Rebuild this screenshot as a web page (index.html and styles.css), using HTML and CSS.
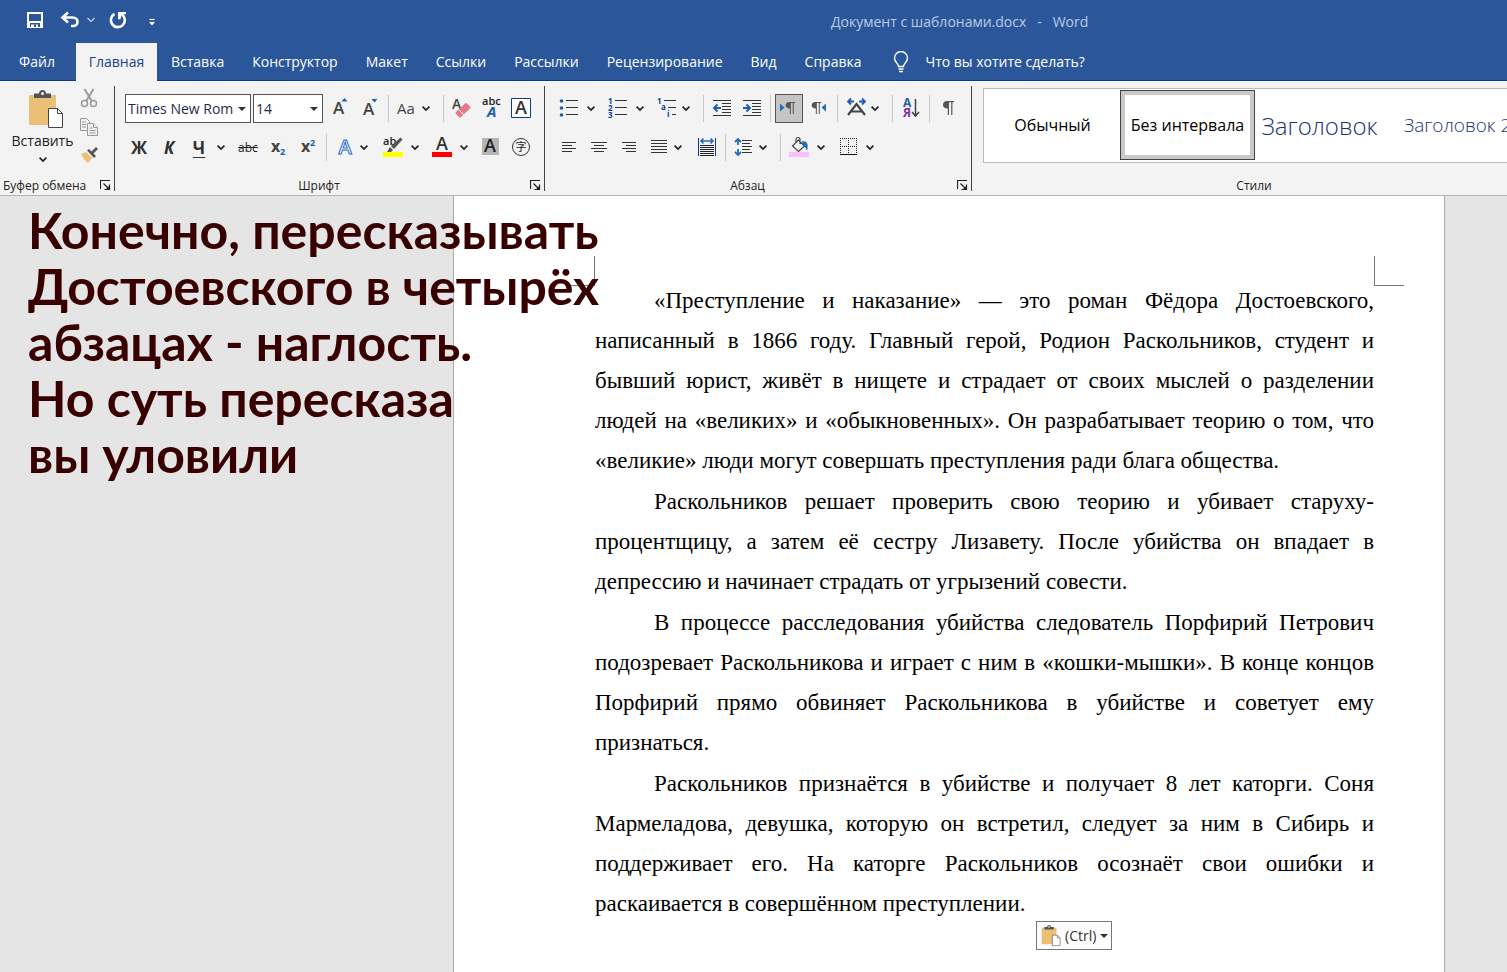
FILE: index.html
```html
<!DOCTYPE html>
<html lang="ru">
<head>
<meta charset="utf-8">
<title>Документ с шаблонами.docx - Word</title>
<link rel="stylesheet" href="styles.css">
</head>
<body>
<svg class="defs" aria-hidden="true">
  <symbol id="chev" viewBox="0 0 14 14"><path d="M3.6 5.6 7 9l3.400-3.400" fill="none" stroke="#222" stroke-width="1.700"/></symbol>
  <symbol id="launch" viewBox="0 0 11 11"><path d="M.5 9V.5H10M3.500 3.500l5 5M9.500 4.500v5h-5" fill="none" stroke="#222" stroke-width="1.200"/><path d="M9.800 5.500v4.300H5.500z" fill="#222"/></symbol>
  <symbol id="pilcrow" viewBox="0 0 14 16"><path d="M6 1h7v1.300h-1.600V15h-1.200V2.300H8V15H6.800V8.500C3.500 8.500 2 7 2 4.800S3.500 1 6 1z" fill="#555"/></symbol>
  <symbol id="clip" viewBox="0 0 36 40"><path d="M1 5h27v30H1z" fill="#eabf76"/><path d="M6 8V3.500h5C11 1.500 12.500 0 14.500 0S18 1.500 18 3.500h5V8z" fill="#555"/><circle cx="14.500" cy="3.500" r="1.500" fill="#f3f3f3"/><path d="M20.500 18.500h9l5 5v14h-14z" fill="#fff" stroke="#444"/><path d="M29.500 18.500v5h5" fill="none" stroke="#444"/></symbol>
</svg>

<header class="titlebar">
  <div class="quick">
    <button class="qb" aria-label="Сохранить"><svg width="18" height="18" viewBox="0 0 18 18"><path d="M1 1h16v16H1z" fill="#fff"/><path d="M3 3h12v7H3zM4 12h10v4H4z" fill="#2b579a"/><path d="M6 12h6v4H6z" fill="#2b579a"/><path d="M5 12h7v4h-2v-2.500H8V16H5z" fill="#fff"/><path d="M5 12h7v1.500H5z" fill="#2b579a"/></svg></button>
    <button class="qb undo" aria-label="Отменить"><svg width="20" height="18" viewBox="0 0 20 18"><path d="M8 1.500 2.500 6.500 8 11.500M3 6.500h9.500c3 0 5 2 5 4.500s-2 4-4.500 4h-2" fill="none" stroke="#fff" stroke-width="2.600"/></svg></button>
    <button class="qb qchev" aria-label="Список отмены"><svg width="10" height="8" viewBox="0 0 10 8"><path d="m1.500 2 3.500 3.500L8.500 2" fill="none" stroke="#c5d5ec" stroke-width="1.200"/></svg></button>
    <button class="qb redo" aria-label="Повторить"><svg width="20" height="20" viewBox="0 0 20 20"><path d="M6.500 4A7 7 0 1 0 14 4.500" fill="none" stroke="#fff" stroke-width="2.600"/><path d="M10 2h8v2.200h-4l-1.600 5H10z" fill="#fff"/></svg></button>
    <button class="qb more" aria-label="Настройка панели"><svg width="8" height="9" viewBox="0 0 8 9"><path d="M1.500 1.500h5" stroke="#fff" stroke-width="1.200"/><path d="M1 4h6L4 7.500z" fill="#fff"/></svg></button>
  </div>
  <div class="doctitle">Документ с шаблонами.docx&nbsp;&nbsp; -&nbsp;&nbsp; Word</div>
</header>

<nav class="tabs">
  <button class="tab file">Файл</button>
  <button class="tab active">Главная</button>
  <button class="tab">Вставка</button>
  <button class="tab">Конструктор</button>
  <button class="tab">Макет</button>
  <button class="tab">Ссылки</button>
  <button class="tab">Рассылки</button>
  <button class="tab">Рецензирование</button>
  <button class="tab">Вид</button>
  <button class="tab">Справка</button>
  <button class="tab tell"><svg width="16" height="22" viewBox="0 0 16 22"><path d="M5.500 15.500c0-3-4-4-4-8.500a6.500 6.500 0 0 1 13 0c0 4.500-4 5.500-4 8.500zM5.500 18h5M6 20.500h4" fill="none" stroke="#fff" stroke-width="1.400"/></svg><span>Что вы хотите сделать?</span></button>
</nav>

<section class="ribbon">
  <div class="group clipboard">
    <div class="clipbody">
      <button class="paste"><svg width="36" height="40"><use href="#clip"/></svg><span>Вставить</span><i class="chevbox"><svg width="14" height="14"><use href="#chev"/></svg></i></button>
      <div class="cliptools">
        <button class="small" aria-label="Вырезать"><svg width="18" height="20" viewBox="0 0 18 20"><g fill="none" stroke="#999" stroke-width="1.500"><circle cx="4.500" cy="15.500" r="3"/><circle cx="13.500" cy="15.500" r="3"/><path d="M4.500 1 11.800 13M13.500 1 6.200 13" stroke-width="2"/></g></svg></button>
        <button class="small" aria-label="Копировать"><svg width="18" height="20" viewBox="0 0 18 20"><g fill="#f3f3f3" stroke="#999"><path d="M.5 1.500h6l3 3v9h-9z"/><path d="M2 5h4M2 7.500h4M2 10h4"/><path d="M7.500 6.500h6l4 4v8h-10z"/><path d="M13.500 6.500v4h4M9.500 11h3M9.500 13.500h6M9.500 16h6"/></g></svg></button>
        <button class="small" aria-label="Формат по образцу"><svg width="18" height="18" viewBox="0 0 18 18"><path d="m1 8 5-2 6 6-4 5c-2-1-5-5-7-9z" fill="#eabf76"/><path d="m7 4.500 2-1.500 7 7-2 2zM11 6l5-5 2 2-5 5z" fill="#555"/></svg></button>
      </div>
    </div>
    <div class="label"><span>Буфер обмена</span><button class="launch" aria-label="Буфер обмена: параметры"><svg width="11" height="11"><use href="#launch"/></svg></button></div>
  </div>

  <div class="group font">
    <div class="row fields">
      <div class="combo name"><select aria-label="Шрифт"><option>Times New Roman</option></select></div>
      <div class="combo size"><select aria-label="Размер шрифта"><option>14</option></select></div>
      <button class="b" aria-label="Увеличить размер"><svg width="30" height="26" viewBox="0 0 30 26"><text x="8" y="19" class="g16">A</text><path d="m16.500 6.500 3-3.500 3 3.500z" fill="#1f5fae"/></svg></button>
      <button class="b" aria-label="Уменьшить размер"><svg width="30" height="26" viewBox="0 0 30 26"><text x="8" y="20" class="g16">A</text><path d="m16.500 4 3 3.500 3-3.500z" fill="#1f5fae"/></svg></button>
      <i class="sep"></i>
      <button class="b n" aria-label="Регистр"><span class="aa">Aa</span></button><button class="c wide" aria-label="Регистр: список"><svg width="14" height="14"><use href="#chev"/></svg></button>
      <i class="sep"></i>
      <button class="b" aria-label="Очистить форматирование"><svg width="30" height="26" viewBox="0 0 30 26"><text x="5" y="14" class="g13">A</text><path d="m9 17 9-8.500q1-1 2 0l3 3q1 1 0 2L14 22q-1 1-2 0l-3-3q-1-1 0-2z" fill="#e5798c"/><path d="m11.500 14.500 5.500 5.500" stroke="#f3f3f3"/></svg></button>
      <button class="b" aria-label="Фонетическое руководство"><svg width="30" height="26" viewBox="0 0 30 26"><text x="5" y="10" class="abc">abc</text><text x="10" y="22" class="bi">A</text></svg></button>
      <button class="b" aria-label="Граница знака"><svg width="30" height="26" viewBox="0 0 30 26"><path d="M4.500 3.500h19v19h-19z" fill="#fff" stroke="#0a3a8a"/><text x="14" y="19" text-anchor="middle" class="g17">A</text></svg></button>
    </div>
    <div class="row two">
      <button class="b bold">Ж</button>
      <button class="b bold ital">К</button>
      <button class="b bold under">Ч</button><button class="c mid" aria-label="Подчеркивание: список"><svg width="14" height="14"><use href="#chev"/></svg></button>
      <button class="b strike">abc</button>
      <button class="b bold idx" aria-label="Подстрочный"><svg width="30" height="26" viewBox="0 0 30 26"><text x="8" y="18" class="x">x</text><text x="17" y="21" class="num">2</text></svg></button>
      <button class="b bold idx" aria-label="Надстрочный"><svg width="30" height="26" viewBox="0 0 30 26"><text x="8" y="18" class="x">x</text><text x="17" y="12" class="num">2</text></svg></button>
      <i class="sep"></i>
      <button class="b n" aria-label="Текстовые эффекты"><svg width="30" height="26" viewBox="0 0 30 26"><text x="15" y="20" text-anchor="middle" class="fx">A</text></svg></button><button class="c wide" aria-label="Эффекты: список"><svg width="14" height="14"><use href="#chev"/></svg></button>
      <button class="b" aria-label="Цвет выделения"><svg width="30" height="26" viewBox="0 0 30 26"><text x="5" y="11" class="abc">ab</text><path d="M5 18h20v5H5z" fill="#ff0"/><path d="m13 12 9.500-8.500 2 2L16 15zM12 13l3 3-2 2H9z" fill="#555"/></svg></button><button class="c mid" aria-label="Выделение: список"><svg width="14" height="14"><use href="#chev"/></svg></button>
      <button class="b" aria-label="Цвет шрифта"><svg width="30" height="26" viewBox="0 0 30 26"><text x="15" y="16" text-anchor="middle" class="g17">A</text><path d="M5 18h20v5H5z" fill="red"/></svg></button><button class="c mid" aria-label="Цвет: список"><svg width="14" height="14"><use href="#chev"/></svg></button>
      <button class="b" aria-label="Затенение знака"><svg width="30" height="26" viewBox="0 0 30 26"><path d="M6 4h17v17H6z" fill="#b5b5b5"/><text x="14" y="18" text-anchor="middle" class="g17 dark">A</text></svg></button>
      <button class="b" aria-label="Обведенный знак"><svg width="30" height="26" viewBox="0 0 30 26"><circle cx="15" cy="13" r="8.500" fill="none" stroke="#333"/><text x="15" y="17" text-anchor="middle" class="cjk">字</text></svg></button>
    </div>
    <div class="label"><span>Шрифт</span><button class="launch" aria-label="Шрифт: параметры"><svg width="11" height="11"><use href="#launch"/></svg></button></div>
  </div>

  <div class="group para">
    <div class="row">
      <button class="b" aria-label="Маркеры"><svg width="30" height="26" viewBox="0 0 30 26"><g fill="#1c5bac"><circle cx="7.500" cy="6" r="1.800"/><circle cx="7.500" cy="13" r="1.800"/><circle cx="7.500" cy="20" r="1.800"/></g><path d="M12 5.500h12M12 12.500h12M12 19.500h12" stroke="#333"/></svg></button><button class="c mid" aria-label="Маркеры: список"><svg width="14" height="14"><use href="#chev"/></svg></button>
      <button class="b" aria-label="Нумерация"><svg width="30" height="26" viewBox="0 0 30 26"><g class="tiny"><text x="5" y="9">1</text><text x="5" y="16">2</text><text x="5" y="23">3</text></g><path d="M12 5.500h12M12 12.500h12M12 19.500h12" stroke="#333"/></svg></button><button class="c mid" aria-label="Нумерация: список"><svg width="14" height="14"><use href="#chev"/></svg></button>
      <button class="b n" aria-label="Многоуровневый список"><svg width="30" height="26" viewBox="0 0 30 26"><g class="tiny"><text x="5" y="9">1</text><text x="9" y="15">a</text><text x="15" y="22">i</text></g><path d="M12 5.500h12M16 12.500h8M20 19.500h4" stroke="#333"/></svg></button><button class="c wide" aria-label="Список: варианты"><svg width="14" height="14"><use href="#chev"/></svg></button>
      <i class="sep"></i>
      <button class="b" aria-label="Уменьшить отступ"><svg width="30" height="26" viewBox="0 0 30 26"><path d="M6 5.500h18M15 8.500h9M15 11.500h9M15 14.500h9M15 17.500h9M6 20.500h18" stroke="#333"/><path d="M14 13H7.500M10.500 9.500 7 13l3.500 3.500" fill="none" stroke="#1f5fae" stroke-width="2"/></svg></button>
      <button class="b" aria-label="Увеличить отступ"><svg width="30" height="26" viewBox="0 0 30 26"><path d="M6 5.500h18M15 8.500h9M15 11.500h9M15 14.500h9M15 17.500h9M6 20.500h18" stroke="#333"/><path d="M6 13h6.500M9.500 9.500 13 13l-3.500 3.500" fill="none" stroke="#1f5fae" stroke-width="2"/></svg></button>
      <i class="sep"></i>
      <button class="b pressed" aria-label="Слева направо" aria-pressed="true"><svg width="28" height="26" viewBox="0 0 28 26"><path d="M5 8.500v8l4.500-4z" fill="#1f6fbf"/><use href="#pilcrow" x="9" y="6" width="12" height="14"/></svg></button>
      <button class="b" aria-label="Справа налево"><svg width="30" height="26" viewBox="0 0 30 26"><path d="M22 8.500v8L17.500 12.500z" fill="#1f6fbf"/><use href="#pilcrow" x="6" y="6" width="12" height="14"/></svg></button>
      <i class="sep"></i>
      <button class="b n" aria-label="Азиатская верстка"><svg width="30" height="26" viewBox="0 0 30 26"><path d="M7 20 15.500 9 24 20M10.500 16.500h10" fill="none" stroke="#444" stroke-width="2.200"/><path d="M13 6.500H7.500M10 3.500l-3 3 3 3M18 6.500h5.500M21 3.500l3 3-3 3" fill="none" stroke="#1f5fae" stroke-width="1.800"/></svg></button><button class="c wide" aria-label="Верстка: список"><svg width="14" height="14"><use href="#chev"/></svg></button>
      <i class="sep"></i>
      <button class="b" aria-label="Сортировка"><svg width="30" height="26" viewBox="0 0 30 26"><text x="7" y="12" class="sortA">А</text><text x="7" y="22" class="sortB">Я</text><path d="M19.500 4v17M16 17l3.500 4 3.500-4" fill="none" stroke="#444" stroke-width="1.500"/></svg></button>
      <i class="sep"></i>
      <button class="b" aria-label="Отобразить все знаки"><svg width="14" height="16"><use href="#pilcrow"/></svg></button>
    </div>
    <div class="row two">
      <button class="b" aria-label="По левому краю"><svg width="30" height="26" viewBox="0 0 30 26"><path d="M8 8.500h14M8 11.500h10M8 14.500h14M8 17.500h10" stroke="#333"/></svg></button>
      <button class="b" aria-label="По центру"><svg width="30" height="26" viewBox="0 0 30 26"><path d="M7 8.500h16M10 11.500h10M7 14.500h16M10 17.500h10" stroke="#333"/></svg></button>
      <button class="b" aria-label="По правому краю"><svg width="30" height="26" viewBox="0 0 30 26"><path d="M8 8.500h14M12 11.500h10M8 14.500h14M12 17.500h10" stroke="#333"/></svg></button>
      <button class="b n" aria-label="По ширине"><svg width="30" height="26" viewBox="0 0 30 26"><path d="M7 6.500h16M7 9.500h16M7 12.500h16M7 15.500h16M7 18.500h16" stroke="#333"/></svg></button><button class="c wide" aria-label="По ширине: список"><svg width="14" height="14"><use href="#chev"/></svg></button>
      <button class="b" aria-label="Распределенный"><svg width="30" height="26" viewBox="0 0 30 26"><path d="M6.500 4v18M23.500 4v18" stroke="#0a3a8a"/><path d="M8 11.500h14M8 13.500h14M8 15.500h14M8 17.500h14M8 19.500h14M8 21.500h14" stroke="#222"/><path d="M9 7h12M11.500 4.500 9 7l2.500 2.500M18.500 4.500 21 7l-2.500 2.500" fill="none" stroke="#1f6fbf" stroke-width="1.600"/></svg></button>
      <i class="sep"></i>
      <button class="b n" aria-label="Интервал"><svg width="30" height="26" viewBox="0 0 30 26"><path d="M13 6.500h10M13 9.500h8M13 12.500h10M13 15.500h8M13 18.500h10" stroke="#333"/><path d="M9 5v6M9 15v6M6 8l3-3 3 3M6 18l3 3 3-3" fill="none" stroke="#1f6fbf" stroke-width="1.800"/></svg></button><button class="c wide" aria-label="Интервал: список"><svg width="14" height="14"><use href="#chev"/></svg></button>
      <i class="sep"></i>
      <button class="b" aria-label="Заливка"><svg width="30" height="26" viewBox="0 0 30 26"><path d="M5 18h20v5H5z" fill="#fbc0fb"/><path d="m8.500 12 6-6 6 6-6 5.500zM12 9V5.500a2 2 0 0 1 4 0V10" fill="none" stroke="#444" stroke-width="1.200"/><path d="M18 7c5 0 7 3 5 10-1-3-2-4-4-5z" fill="#1f6fbf"/></svg></button><button class="c mid" aria-label="Заливка: список"><svg width="14" height="14"><use href="#chev"/></svg></button>
      <button class="b" aria-label="Границы"><svg width="30" height="26" viewBox="0 0 30 26"><path d="M7 4.500h17M7 12.500h17M7.500 4v17M15.500 4v17M23.500 4v17" stroke="#222" stroke-dasharray="1 1"/><path d="M7 20.500h17" stroke="#111"/></svg></button><button class="c mid" aria-label="Границы: список"><svg width="14" height="14"><use href="#chev"/></svg></button>
    </div>
    <div class="label"><span>Абзац</span><button class="launch" aria-label="Абзац: параметры"><svg width="11" height="11"><use href="#launch"/></svg></button></div>
  </div>

  <div class="group styles">
    <div class="gallery">
      <button class="style">Обычный</button>
      <button class="style chosen">Без интервала</button>
      <button class="style h1">Заголовок</button>
      <button class="style h2">Заголовок 2</button>
    </div>
    <div class="label"><span>Стили</span></div>
  </div>
</section>

<main class="work">
  <article class="page">
    <i class="corner left"></i><i class="corner right"></i>
    <p>«Преступление и наказание» — это роман Фёдора Достоевского, написанный в 1866 году. Главный герой, Родион Раскольников, студент и бывший юрист, живёт в нищете и страдает от своих мыслей о разделении людей на «великих» и «обыкновенных». Он разрабатывает теорию о том, что «великие» люди могут совершать преступления ради блага общества.</p>
    <p>Раскольников решает проверить свою теорию и убивает старуху-процентщицу, а затем её сестру Лизавету. После убийства он впадает в депрессию и начинает страдать от угрызений совести.</p>
    <p>В процессе расследования убийства следователь Порфирий Петрович подозревает Раскольникова и играет с ним в «кошки-мышки». В конце концов Порфирий прямо обвиняет Раскольникова в убийстве и советует ему признаться.</p>
    <p>Раскольников признаётся в убийстве и получает 8 лет каторги. Соня Мармеладова, девушка, которую он встретил, следует за ним в Сибирь и поддерживает его. На каторге Раскольников осознаёт свои ошибки и раскаивается в совершённом преступлении.</p>
    <button class="pasteopt"><svg width="20" height="22"><use href="#clip"/></svg><span>(Ctrl)</span><i class="tri"></i></button>
  </article>
  <h1 class="caption">Конечно, пересказывать<br>Достоевского в четырёх<br>абзацах - наглость.<br>Но суть пересказа<br>вы уловили</h1>
</main>
</body>
</html>
```
FILE: styles.css
```css
* { box-sizing: border-box; }
body {
  margin: 0;
  min-height: 100vh;
  display: flex;
  flex-direction: column;
  overflow: hidden;
  font-family: "Open Sans", "Noto Sans", sans-serif;
  font-size: 14px;
  color: #222;
  background: #e5e5e5;
}
button {
  border: 0;
  padding: 0;
  margin: 0;
  background: none;
  font: inherit;
  color: inherit;
}
svg { display: block; flex: none; }
.defs { position: absolute; width: 0; height: 0; }

.titlebar {
  display: grid;
  grid-template-columns: 831px 1fr;
  align-items: center;
  height: 43px;
  background: #2b579a;
  color: #b9cbe6;
}
.quick { display: flex; align-items: center; height: 40px; align-self: start; padding-left: 26px; }
.undo { margin-left: 16px; }
.qchev { margin-left: 6px; }
.redo { margin-left: 12px; }
.more { margin-left: 20px; padding-top: 4px; }
.doctitle { white-space: nowrap; }

.tabs {
  display: flex;
  height: 38px;
  background: #2b579a;
  border-bottom: 1px solid #0a3a8a;
  color: #fff;
}
.tab { padding: 0 14px; white-space: nowrap; }
.file { width: 76px; padding-right: 16px; }
.active { width: 81px; margin-bottom: -1px; padding: 0 12px 1px; background: #f3f3f3; color: #1c3f8c; }
.tell { display: flex; align-items: center; gap: 16px; padding-left: 18px; }

.ribbon {
  display: flex;
  height: 115px;
  background: #f3f3f3;
  border-bottom: 1px solid #b5b5b5;
}
.group {
  position: relative;
  display: flex;
  flex-direction: column;
  padding-top: 7px;
  flex: none;
}
.group:not(.styles)::after {
  content: "";
  position: absolute;
  right: 0;
  top: 5px;
  bottom: 4px;
  width: 1px;
  background: #444;
}
.clipboard { width: 115px; }
.font { width: 430px; padding-left: 9px; }
.para { width: 427px; padding-left: 9px; }
.styles { flex: 1 1 0; min-width: 0; padding-left: 11px; }

.row { display: flex; align-items: center; height: 40px; }
.row.two { height: 38px; }
.b { display: flex; align-items: center; justify-content: center; flex: none; width: 30px; height: 30px; }
.b.n { width: 27px; justify-content: flex-start; }
.c { width: 14px; height: 30px; flex: none; display: flex; align-items: center; }
.c.mid { width: 19px; }
.c.wide { width: 21px; }
.sep { width: 1px; height: 27px; margin: 0 3px; background: #c8c8c8; flex: none; }
.pressed { width: 28px; height: 29px; margin: 0 1px; border: 1px solid #555; background: #c5c5c5; }

.label {
  position: relative;
  display: flex;
  justify-content: center;
  margin-top: auto;
  height: 19px;
  line-height: 19px;
  font-size: 12px;
}
.font .label, .para .label { margin-left: -9px; padding-right: 22px; }
.clipboard .label { justify-content: flex-start; padding-left: 3px; }
.styles .label { padding-left: 18px; }
.launch { position: absolute; right: 4px; top: 4px; }

.clipbody { display: flex; }
.paste {
  display: flex;
  flex-direction: column;
  align-items: center;
  width: 82px;
  padding: 2px 0 0 9px;
}
.paste span, .chevbox { line-height: 22px; margin-right: 6px; }
.cliptools { display: flex; flex-direction: column; gap: 9px; margin-left: -2px; }

.combo { position: relative; height: 29px; border: 1px solid #555; background: #fff; }
.combo.name { width: 126px; margin: 0 2px 0 1px; }
.combo.size { width: 70px; margin-right: 2px; }
.combo select {
  appearance: none;
  width: 100%;
  height: 100%;
  border: 0;
  padding: 0 16px 0 2px;
  background: none;
  font: inherit;
  color: #1f2a4a;
}
.combo::after, .tri {
  content: "";
  border: solid transparent;
  border-width: 4px 4px 0;
  border-top-color: #333;
}
.combo::after { position: absolute; right: 4px; top: 12px; }

text { font-family: "Open Sans", sans-serif; fill: #444; }
.g17 { font-size: 18px; font-weight: 600; fill: #333; }
.g16 { font-size: 17px; font-weight: 600; }
.g13 { font-size: 14px; font-weight: 600; }
.dark { fill: #222; }
.abc { font-size: 11px; fill: #222; font-weight: 600; }
.bi { font-size: 15px; font-weight: 700; font-style: italic; fill: #1f5fae; }
.x { font-size: 16px; font-weight: 700; }
.num { font-size: 9px; font-weight: 700; fill: #1f5fae; }
.fx { font-size: 20px; font-weight: 600; fill: #fff; stroke: #1f6fbf; stroke-width: 1px; }
.cjk { font-family: "Noto Sans CJK SC", sans-serif; font-size: 11px; fill: #222; }
.tiny text { font-size: 8px; font-weight: 700; fill: #0a3f9a; }
.sortA, .sortB { font-size: 12px; font-weight: 700; fill: #1f5fae; }
.sortB { fill: #7a2fa8; }
.aa { padding-left: 5px; font-size: 15px; color: #444; }
.bold { font-size: 17px; font-weight: 700; color: #333; }
.ital { font-style: italic; }
.under { text-decoration: underline; text-underline-offset: 3px; text-decoration-thickness: 1px; }
.strike { font-size: 12px; text-decoration: line-through; }

.gallery {
  display: flex;
  height: 75px;
  padding: 1px 0;
  border: 1px solid #b9b9b9;
  border-right: 0;
  background: #fff;
  overflow: hidden;
}
.style { flex: none; width: 135px; margin-left: 1px; white-space: nowrap; font-size: 16px; color: #000; height: 70px; }
.style + .style { margin-left: 0; }
.chosen { border: 1px solid #444; box-shadow: inset 0 0 0 4px #cbc9c7; }
.style.h1 { padding-right: 6px; font-size: 24px; font-weight: 300; color: #1d3273; }
.style.h2 { font-size: 19px; font-weight: 300; color: #1d3273; }

.work {
  position: relative;
  flex: 1;
  display: grid;
  grid-template-columns: 453px minmax(0, 992px) 1fr;
}
.page {
  position: relative;
  grid-column: 2;
  padding: 85px 70px 40px 141px;
  border: 1px solid #ababab;
  border-width: 0 1px;
  background: #fff;
  font-family: "Liberation Serif", serif;
  font-size: 23px;
  line-height: 40px;
  color: #000;
}
.page p { margin: 0 0 1px; text-align: justify; text-indent: 59px; }
.corner { position: absolute; top: 60px; width: 30px; height: 30px; border: solid #777; }
.corner.left { left: 111px; border-width: 0 1px 1px 0; }
.corner.right { right: 40px; border-width: 0 0 1px 1px; }
.pasteopt {
  position: absolute;
  left: 582px;
  top: 725px;
  display: flex;
  align-items: center;
  gap: 4px;
  height: 29px;
  padding: 0 3px 0 4px;
  border: 1px solid #777;
  background: #fdfdfd;
  font-family: "Open Sans", sans-serif;
  font-size: 14px;
  line-height: 20px;
  color: #333;
}
.caption {
  position: absolute;
  left: 28px;
  top: 6px;
  margin: 0;
  font-family: Lato, sans-serif;
  font-size: 50px;
  font-weight: 700;
  line-height: 56px;
  white-space: nowrap;
  color: #380000;
}
```
